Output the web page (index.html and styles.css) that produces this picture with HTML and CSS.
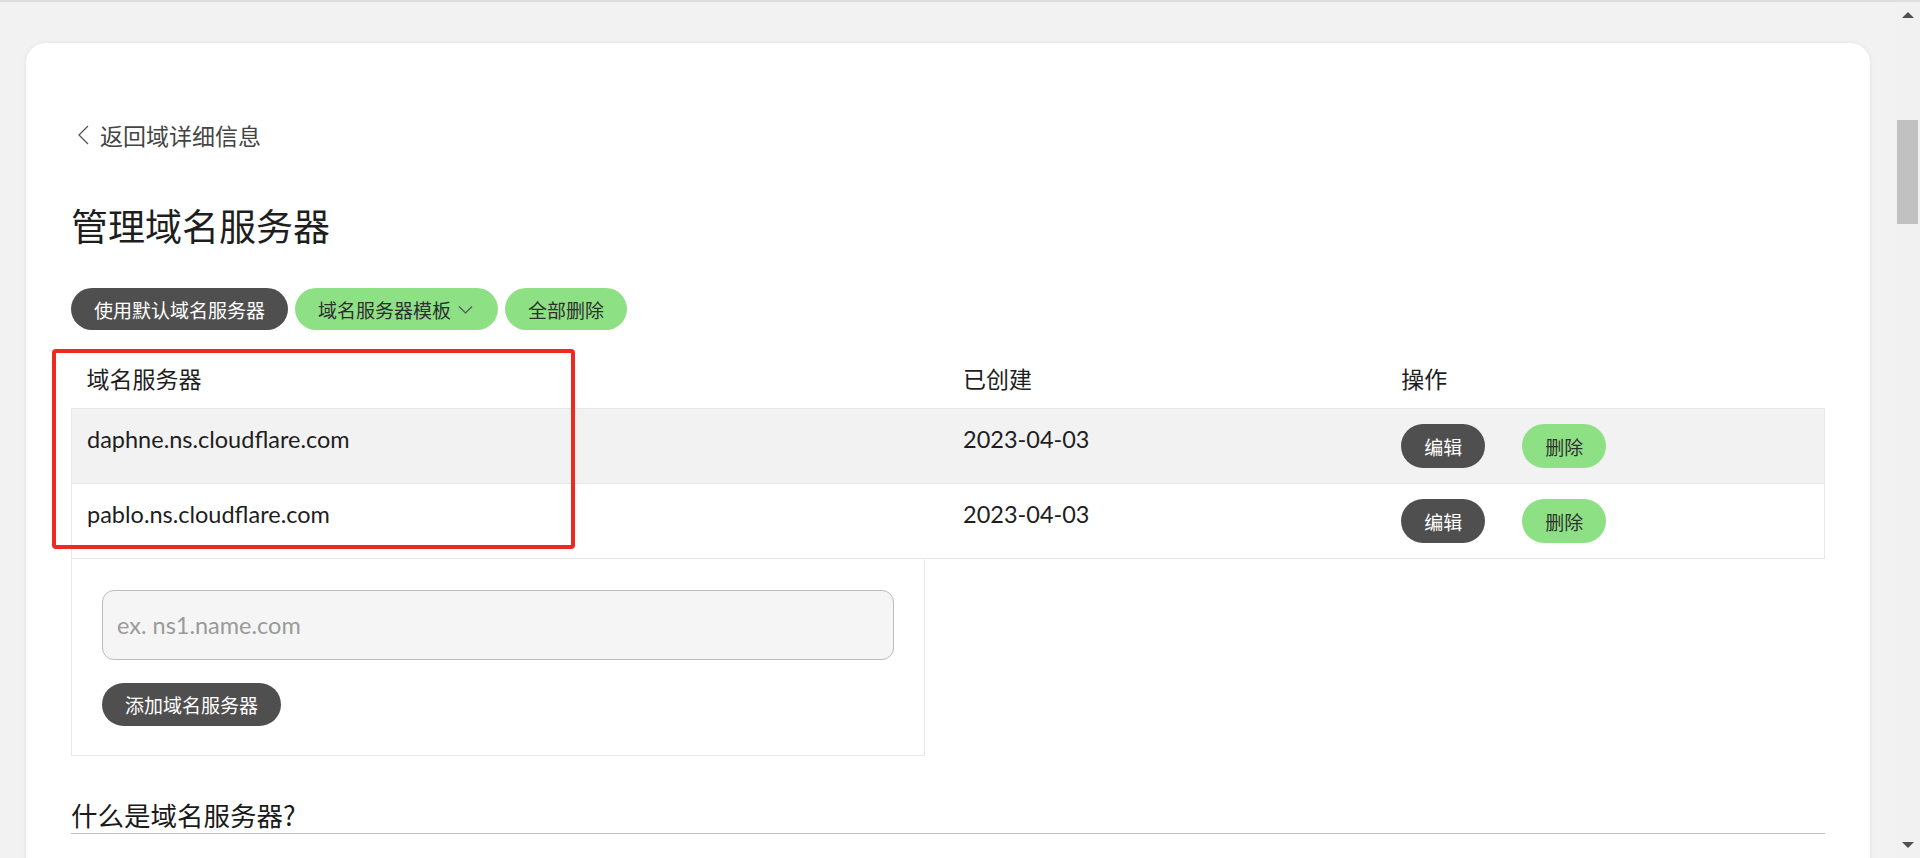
FILE: index.html
```html
<!DOCTYPE html>
<html lang="zh-CN">
<head>
<meta charset="utf-8">
<title>管理域名服务器</title>
<link rel="stylesheet" href="styles.css">
</head>
<body>
<div class="topline"></div>
<div class="frame">
  <main class="main">
    <div class="card">
      <a class="back" href="#">
        <svg class="back-icon" width="16" height="20" viewBox="0 0 16 20"><path d="M14 1 L5 10 L14 19" fill="none" stroke="#555" stroke-width="1.3"/></svg>
        <span>返回域详细信息</span>
      </a>
      <h1 class="title">管理域名服务器</h1>
      <div class="actions">
        <button class="btn btn-dark">使用默认域名服务器</button>
        <button class="btn btn-green btn-drop">域名服务器模板<svg class="caret" width="15" height="10" viewBox="0 0 15 10"><path d="M1 1.5 L7.5 8 L14 1.5" fill="none" stroke="#555" stroke-width="1.2"/></svg></button>
        <button class="btn btn-green">全部删除</button>
      </div>
      <div class="table-wrap">
        <table class="ns-table">
          <thead>
            <tr><th class="c1">域名服务器</th><th class="c2">已创建</th><th class="c3">操作</th></tr>
          </thead>
          <tbody>
            <tr class="odd">
              <td>daphne.ns.cloudflare.com</td>
              <td>2023-04-03</td>
              <td><div class="row-actions"><button class="btn btn-dark btn-sm">编辑</button><button class="btn btn-green btn-sm">删除</button></div></td>
            </tr>
            <tr>
              <td>pablo.ns.cloudflare.com</td>
              <td>2023-04-03</td>
              <td><div class="row-actions"><button class="btn btn-dark btn-sm">编辑</button><button class="btn btn-green btn-sm">删除</button></div></td>
            </tr>
          </tbody>
        </table>
        <div class="highlight"></div>
      </div>
      <form class="add-form">
        <input class="ns-input" type="text" placeholder="ex. ns1.name.com">
        <button class="btn btn-dark btn-add" type="button">添加域名服务器</button>
      </form>
      <h2 class="subhead">什么是域名服务器?</h2>
    </div>
  </main>
  <div class="scrollbar">
    <div class="arrow arrow-up"></div>
    <div class="thumb"></div>
    <div class="track"></div>
    <div class="arrow arrow-down"></div>
  </div>
</div>
</body>
</html>
```

FILE: styles.css
```css
* { box-sizing: border-box; }
html, body {
  margin: 0;
  height: 858px;
  overflow: hidden;
}
body {
  background: #f2f2f2;
  font-family: Lato, "Noto Sans CJK SC", sans-serif;
  color: #222;
}
.topline {
  height: 2px;
  background: #dedede;
}
.frame {
  display: flex;
  height: 856px;
}
.main {
  flex: 1;
  padding: 41px 25px 0 26px;
  overflow: hidden;
}
.card {
  background: #fff;
  border-radius: 20px 20px 0 0;
  box-shadow: 0 0 5px rgba(0,0,0,0.07);
  height: 1000px;
  padding: 77px 45px 0 45px;
}
.back {
  display: flex;
  align-items: center;
  height: 30px;
  color: #444;
  text-decoration: none;
  font-family: "Noto Sans CJK SC", sans-serif;
  font-size: 23px;
  line-height: 30px;
}
.back-icon {
  margin-left: 3px;
  margin-right: 10px;
}
.title {
  margin: 53px 0 0 0;
  font-family: "Noto Sans CJK SC", sans-serif;
  font-weight: 400;
  font-size: 37px;
  line-height: 44px;
  height: 44px;
  color: #1e1e1e;
}
.actions {
  display: flex;
  gap: 7px;
  margin-top: 41px;
}
.btn {
  display: inline-flex;
  align-items: center;
  height: 42px;
  padding: 0 23px;
  border: 0;
  border-radius: 22px;
  font-family: "Noto Sans CJK SC", sans-serif;
  font-size: 19px;
  line-height: 1;
  cursor: pointer;
}
.btn-dark { background: #4f4f4f; color: #fff; }
.btn-green { background: #8ee084; color: #2f2f2f; }
.btn-drop { padding-right: 25px; }
.caret { margin-left: 7px; margin-top: 2px; }
.table-wrap {
  position: relative;
  margin-top: 18px;
}
.ns-table {
  width: 100%;
  border-collapse: collapse;
  table-layout: fixed;
}
.ns-table th {
  text-align: left;
  font-family: "Noto Sans CJK SC", sans-serif;
  font-weight: 400;
  font-size: 23px;
  line-height: 30px;
  padding: 15px 15px;
  color: #1e1e1e;
}
.c1 { width: 50%; }
.c2 { width: 25%; }
.c3 { width: 25%; }
.ns-table td {
  vertical-align: top;
  padding: 15px 15px;
  font-size: 23.5px;
  line-height: 30px;
  color: #1e1e1e;
  border-top: 1px solid #e6e6e6;
  border-bottom: 1px solid #e6e6e6;
}
.ns-table tbody tr td:first-child { border-left: 1px solid #e8e8e8; }
.ns-table tbody tr td:last-child { border-right: 1px solid #e8e8e8; }
.ns-table tr.odd td { background: #f2f2f2; }
.row-actions {
  display: flex;
  gap: 37px;
}
.btn-sm {
  height: 44px;
  padding: 0 23px;
}
.highlight {
  position: absolute;
  left: -19px;
  top: 1px;
  width: 523px;
  height: 200px;
  border: 4px solid #ee2a1f;
  border-radius: 4px;
  pointer-events: none;
}
.add-form {
  width: 854px;
  border: 1px solid #e8e8e8;
  border-top: 0;
  padding: 31px 30px 29px 30px;
}
.ns-input {
  display: block;
  width: 792px;
  height: 70px;
  border: 1px solid #bcbcbc;
  border-radius: 12px;
  background: #f5f5f5;
  padding: 0 14px;
  font-family: Lato, sans-serif;
  font-size: 23.5px;
  color: #333;
  outline: none;
}
.ns-input::placeholder { color: #9a9a9a; }
.btn-add {
  margin-top: 23px;
  height: 43px;
}
.subhead {
  margin: 42px 0 0 0;
  font-family: "Noto Sans CJK SC", sans-serif;
  font-weight: 400;
  font-size: 26.5px;
  line-height: 34px;
  padding-bottom: 1px;
  border-bottom: 1px solid #bdbdbd;
  color: #1a1a1a;
}
.scrollbar {
  width: 25px;
  display: flex;
  flex-direction: column;
  align-items: center;
  background: #f1f1f1;
}
.arrow {
  width: 0;
  height: 0;
  border-left: 6px solid transparent;
  border-right: 6px solid transparent;
}
.arrow-up {
  margin-top: 10px;
  border-bottom: 6px solid #505050;
}
.thumb {
  margin-top: 102px;
  width: 21px;
  height: 104px;
  background: #c1c1c1;
}
.track { flex: 1; }
.arrow-down {
  margin-bottom: 10px;
  border-top: 6px solid #505050;
}
```
